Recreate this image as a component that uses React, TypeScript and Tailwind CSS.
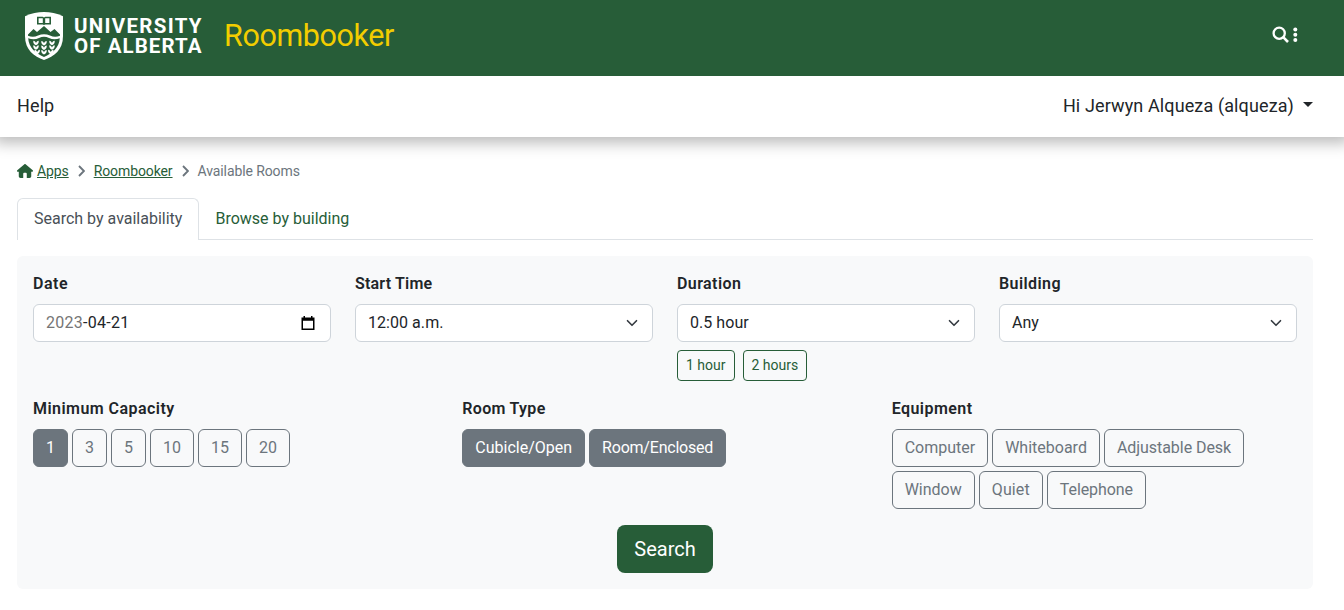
import React from "react";

const label = "mb-2 block h-6 text-base leading-6 font-semibold text-[#212529]";

const leaves = [
  [11, 31], [11, 35.5], [12.2, 40],
  [19, 31.3], [19, 35.8], [19, 40.3],
  [27, 31], [27, 35.5], [25.8, 40],
];

function Shield() {
  return (
    <svg width="38" height="48" viewBox="0 0 38 48" className="block shrink-0">
      <path d="M0 4.2 Q19 -4 38 4.2 V24 C38 38 29 44.5 19 48 C9 44.5 0 38 0 24 Z" fill="#fff" />
      <path d="M12 4.8 H17.6 L19 5.5 L20.4 4.8 H26 V12.500 H20.4 L19 13 L17.600 12.500 H12 Z" fill="#275d38" />
      <path d="M13.600 6.300 H17.800 V10.900 H13.600 Z M20.200 6.300 H24.400 V10.900 H20.200 Z" fill="#fff" />
      <path d="M3 22.5 L8.5 17 L12 20 L19 14 L25.5 20 L29.5 17 L35 22.5 V23.8 Q30 26 25 23.6 Q19 21 13 23.6 Q8 26 3 23.8 Z" fill="#275d38" />
      <path d="M3.2 26.3 Q9 28.5 14 26 Q19 23.6 24 26 Q29 28.5 34.8 26.3 C34.3 35.5 27.5 41.5 19 45 C10.500 41.5 3.700 35.5 3.200 26.3 Z" fill="#275d38" />
      <g fill="#fff">
        {leaves.map(([x, y]) => (
          <path key={`${x}-${y}`} transform={`translate(${x} ${y})`} d="M0 2.200 C-2 1.700 -3 0 -2.700 -2.200 C-1.300 -2 -0.400 -1.200 0 0 C0.400 -1.200 1.300 -2 2.700 -2.200 C3 0 2 1.700 0 2.200 Z" />
        ))}
      </g>
    </svg>
  );
}

function HomeIcon() {
  return (
    <svg width="16" height="14" viewBox="0 0 576 512" fill="#275d38" preserveAspectRatio="none" className="block">
      <path d="M575.800 255.500c0 18-15 32.100-32 32.100h-32l.7 160.200c.2 35.500-28.500 64.300-64 64.300H352V352c0-18-14-32-32-32h-64c-18 0-32 14-32 32v160H128.100c-35.300 0-64-28.700-64-64V287.600H32c-18 0-32-14-32-32.100 0-9 3-17 10-24L266.400 8c7-7 15-8 22-8s15 2 21 7l256 224.500c8 7 12 15 11 24z" />
    </svg>
  );
}

function Chevron() {
  return (
    <svg width="7" height="12" viewBox="0 0 7 12" fill="none" stroke="#6c757d" strokeWidth="1.8" className="mx-[9px] block">
      <path d="M1 1 L5.900 6 L1 11" />
    </svg>
  );
}

function Select({ value }: { value: string }) {
  return (
    <button className="flex h-[38px] w-full items-center justify-between rounded-md border border-[#ced4da] bg-white px-3 text-base tracking-[0.05px] text-[#212529]">
      <span>{value}</span>
      <svg width="16" height="12" viewBox="0 0 16 16" fill="none" stroke="#343a40" strokeWidth="2.200" strokeLinecap="round" strokeLinejoin="round" className="block">
        <path d="m2 5 6 6 6-6" />
      </svg>
    </button>
  );
}

function Toggle({ children, on, spacing = "" }: { children: React.ReactNode; on?: boolean; spacing?: string }) {
  return (
    <button className={`h-[38px] rounded-md border border-[#6c757d] px-3 text-base leading-6 ${spacing} ${on ? "bg-[#6c757d] text-white" : "text-[#6c757d]"}`}>
      {children}
    </button>
  );
}

export default function App() {
  return (
    <div className="h-[610px] w-full overflow-hidden bg-white font-['Roboto',sans-serif] text-base text-[#212529]">
      <header className="relative z-10 flex h-[76px] items-start bg-[#275d38] pl-[25px]">
        <div className="flex pt-3">
          <Shield />
          <svg width="130" height="48" className="ml-[11px] block" fill="#fff">
            <text x="0" y="20.500" fontSize="20.5" fontWeight="700" textLength="127.5" fontFamily="Roboto, sans-serif">UNIVERSITY</text>
            <text x="0" y="41" fontSize="20.5" fontWeight="700" textLength="127.5" fontFamily="Roboto, sans-serif">OF ALBERTA</text>
          </svg>
        </div>
        <div className="ml-[20px] pt-[15.5px] text-[30.5px] leading-10 font-normal tracking-[-0.4px] text-[#f2cd00]">Roombooker</div>
        <div className="mr-[46px] ml-auto flex items-center gap-1 pt-[26px]">
          <svg width="17" height="17" viewBox="0 0 17 17" fill="none" stroke="#fff" className="block">
            <circle cx="7.200" cy="7.200" r="5.600" strokeWidth="2.300" />
            <path d="M11.200 11.200 L16 16" strokeWidth="2.600" />
          </svg>
          <svg width="5" height="15" viewBox="0 0 5 15" fill="#fff" className="block">
            <circle cx="2.300" cy="2.500" r="2" />
            <circle cx="2.300" cy="7.700" r="2" />
            <circle cx="2.300" cy="12.900" r="2" />
          </svg>
        </div>
      </header>

      <nav className="relative flex h-[61px] items-center justify-between bg-white pr-[31px] pb-px pl-[17px] text-lg tracking-[0.12px] shadow-[0_0_14px_6px_rgba(0,0,0,0.27)]">
        <a>Help</a>
        <a className="flex items-center">
          Hi Jerwyn Alqueza (alqueza)
          <span className="mb-[3px] ml-[9px] border-x-[5px] border-t-[5px] border-x-transparent border-t-[#212529]" />
        </a>
      </nav>

      <main className="pr-[31px] pl-[17px]">
        <div className="flex h-[61px] items-center pt-[7px] text-sm tracking-[-0.1px] text-[#6c757d]">
          <HomeIcon />
          <a className="ml-1 text-[#275d38] underline">Apps</a>
          <Chevron />
          <a className="text-[#275d38] underline">Roombooker</a>
          <Chevron />
          <span>Available Rooms</span>
        </div>

        <div className="flex h-[42px] border-b border-[#dee2e6]">
          <div className="-mb-px h-[42px] rounded-t-md border border-b-0 border-[#dee2e6] bg-white px-4 pt-2 leading-6 text-[#495057]">Search by availability</div>
          <div className="px-4 pt-[9px] leading-6 text-[#275d38]">Browse by building</div>
        </div>

        <section className="mt-4 h-[333px] rounded-md bg-[#f8f9fa] p-4">
          <div className="grid h-[125px] grid-cols-4 items-start gap-6">
            <div>
              <span className={`${label} tracking-[0.5px]`}>Date</span>
              <div className="flex h-[38px] items-center justify-between rounded-md border border-[#ced4da] bg-white pr-[15px] pl-3">
                <span className="tracking-[0.28px]"><span className="text-[#757575]">2023</span>-04-21</span>
                <svg width="14" height="14" viewBox="0 0 14 15" preserveAspectRatio="none" fill="#000" className="mb-px block">
                  <path d="M0.500 1.500 H2.500 V0 H4 V1.500 H10 V0 H11.500 V1.500 H13.500 V15 H0.500 Z M2 5 V13.500 H12 V5 Z" fillRule="evenodd" />
                </svg>
              </div>
            </div>
            <div>
              <span className={`${label} tracking-[0.2px]`}>Start Time</span>
              <Select value="12:00 a.m." />
            </div>
            <div>
              <span className={`${label} tracking-[0.42px]`}>Duration</span>
              <Select value="0.5 hour" />
              <div className="mt-2 flex gap-2 text-sm text-[#275d38]">
                <button className="h-[31px] rounded border border-[#275d38] px-2 pb-0.5">1 hour</button>
                <button className="h-[31px] rounded border border-[#275d38] px-2 pb-0.5">2 hours</button>
              </div>
            </div>
            <div>
              <span className={`${label} tracking-[0.42px]`}>Building</span>
              <Select value="Any" />
            </div>
          </div>

          <div className="grid h-32 grid-cols-3 items-start gap-6">
            <div>
              <span className={`${label} tracking-[0.45px]`}>Minimum Capacity</span>
              <div className="flex gap-1">
                <Toggle on>1</Toggle>
                <Toggle>3</Toggle>
                <Toggle>5</Toggle>
                <Toggle>10</Toggle>
                <Toggle>15</Toggle>
                <Toggle>20</Toggle>
              </div>
            </div>
            <div>
              <span className={`${label} tracking-[0.3px]`}>Room Type</span>
              <div className="flex gap-1">
                <Toggle on>Cubicle/Open</Toggle>
                <Toggle on spacing="tracking-[-0.22px]">Room/Enclosed</Toggle>
              </div>
            </div>
            <div>
              <span className={`${label} tracking-[0.45px]`}>Equipment</span>
              <div className="flex flex-wrap gap-1">
                <Toggle>Computer</Toggle>
                <Toggle>Whiteboard</Toggle>
                <Toggle spacing="tracking-[-0.05px]">Adjustable Desk</Toggle>
                <Toggle>Window</Toggle>
                <Toggle spacing="tracking-[0.12px]">Quiet</Toggle>
                <Toggle spacing="tracking-[-0.08px]">Telephone</Toggle>
              </div>
            </div>
          </div>

          <button className="mx-auto block h-12 rounded-lg bg-[#275d38] px-[17px] text-xl text-white">Search</button>
        </section>
      </main>
    </div>
  );
}
